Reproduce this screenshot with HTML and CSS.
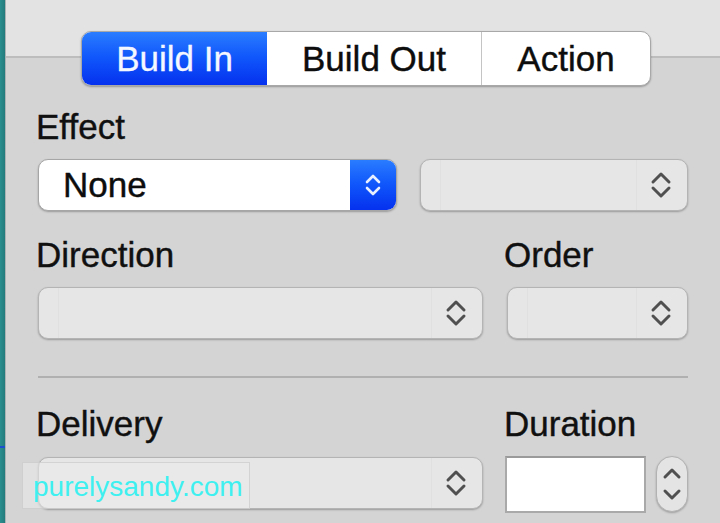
FILE: index.html
```html
<!DOCTYPE html>
<html lang="en">
<head>
<meta charset="utf-8">
<title>Build In</title>
<link rel="stylesheet" href="styles.css">
</head>
<body>
<div class="app">
  <div class="edge"><span class="edge-mark"></span></div>
  <div class="panel">
    <div class="tabs">
      <div class="seg seg-active">Build In</div>
      <div class="seg">Build Out</div>
      <div class="seg seg-last">Action</div>
    </div>

    <div class="label label-effect">Effect</div>
    <div class="row-effect">
      <div class="popup popup-primary">
        <span class="popup-text">None</span>
        <span class="popup-arrow-blue">
          <svg width="22" height="30" viewBox="0 0 22 30"><path d="M5 12 L11 6 L17 12 M5 18 L11 24 L17 18" fill="none" stroke="#e8f0ff" stroke-width="2.6" stroke-linecap="round" stroke-linejoin="round"/></svg>
        </span>
      </div>
      <div class="popup popup-side">
        <span class="popup-cell"></span>
        <span class="popup-arrow">
          <svg width="24" height="32" viewBox="0 0 24 32"><path d="M4 13 L12 5 L20 13 M4 19 L12 27 L20 19" fill="none" stroke="#505050" stroke-width="3" stroke-linecap="round" stroke-linejoin="round"/></svg>
        </span>
      </div>
    </div>

    <div class="grid grid-dir">
      <div class="label">Direction</div>
      <div class="label label-right">Order</div>
      <div class="popup">
        <span class="popup-cell"></span>
        <span class="popup-arrow">
          <svg width="24" height="32" viewBox="0 0 24 32"><path d="M4 13 L12 5 L20 13 M4 19 L12 27 L20 19" fill="none" stroke="#505050" stroke-width="3" stroke-linecap="round" stroke-linejoin="round"/></svg>
        </span>
      </div>
      <div class="popup">
        <span class="popup-cell"></span>
        <span class="popup-arrow">
          <svg width="24" height="32" viewBox="0 0 24 32"><path d="M4 13 L12 5 L20 13 M4 19 L12 27 L20 19" fill="none" stroke="#505050" stroke-width="3" stroke-linecap="round" stroke-linejoin="round"/></svg>
        </span>
      </div>
    </div>

    <div class="separator"></div>

    <div class="grid grid-del">
      <div class="label">Delivery</div>
      <div class="label label-right">Duration</div>
      <div class="popup popup-del">
        <span class="popup-cell"></span>
        <span class="popup-arrow">
          <svg width="24" height="32" viewBox="0 0 24 32"><path d="M4 13 L12 5 L20 13 M4 19 L12 27 L20 19" fill="none" stroke="#505050" stroke-width="3" stroke-linecap="round" stroke-linejoin="round"/></svg>
        </span>
      </div>
      <div class="duration">
        <div class="field"></div>
        <div class="stepper">
          <svg width="24" height="40" viewBox="0 0 24 40"><path d="M5 13 L12 6 L19 13 M5 27 L12 34 L19 27" fill="none" stroke="#505050" stroke-width="3" stroke-linecap="round" stroke-linejoin="round"/></svg>
        </div>
      </div>
    </div>

    <div class="watermark">purelysandy.com</div>
  </div>
</div>
</body>
</html>
```

FILE: styles.css
```css
html, body {
  margin: 0;
  padding: 0;
}
body {
  width: 720px;
  height: 523px;
  overflow: hidden;
  font-family: "Liberation Sans", Arial, sans-serif;
  background: #d4d4d4;
  color: #111;
}
.app {
  display: flex;
  height: 523px;
}
.edge {
  position: relative;
  width: 5px;
  flex: none;
  background: linear-gradient(to right, #2b8f8f, #237b7d);
  border-right: 1px solid #a9b3b3;
}
.edge-mark {
  position: absolute;
  left: 0;
  top: 446px;
  width: 5px;
  height: 2px;
  background: #1a4fd0;
}
.panel {
  position: relative;
  flex: 1;
  padding: 31px 32px 0 32px;
  background: linear-gradient(to bottom, #e3e3e3 0, #e3e3e3 56px, #bdbdbd 56px, #bdbdbd 58px, #d4d4d4 58px);
}

/* segmented control */
.tabs {
  display: flex;
  width: 570px;
  height: 55px;
  margin-left: 43px;
  box-sizing: border-box;
  border: 1px solid #a8a8a8;
  border-radius: 10px;
  background: #fff;
  box-shadow: 0 1px 2px rgba(0,0,0,0.3);
  overflow: hidden;
}
.seg {
  display: flex;
  align-items: center;
  justify-content: center;
  font-size: 35px;
  color: #0d0d0d;
  -webkit-text-stroke: 0.4px #0d0d0d;
  width: 214px;
  border-right: 1px solid #c4c4c4;
}
.seg-active {
  width: 185px;
  color: #f4f7ff;
  -webkit-text-stroke: 0.3px #f4f7ff;
  background: linear-gradient(to bottom, #2a7cff 0%, #0f55fb 50%, #0531ee 100%);
  border-right: none;
}
.seg-last {
  flex: 1;
  border-right: none;
}

/* labels */
.label {
  font-size: 35px;
  line-height: 40px;
  color: #101010;
  -webkit-text-stroke: 0.4px #101010;
  margin-left: -2px;
}
.label-effect {
  margin-top: 21px;
}
.label-right {
  margin-left: -3px;
}

/* popups */
.row-effect {
  display: flex;
  gap: 23px;
  margin-top: 12px;
}
.popup {
  display: flex;
  align-items: stretch;
  height: 52px;
  box-sizing: border-box;
  border: 1px solid #b4b4b4;
  border-radius: 10px;
  background: #e6e6e6;
  box-shadow: 0 1px 2px rgba(0,0,0,0.28);
  overflow: hidden;
}
.popup-primary {
  width: 359px;
  background: #fff;
  border-color: #a6a6a6;
}
.popup-side {
  width: 268px;
}
.popup-text {
  flex: 1;
  display: flex;
  align-items: center;
  padding-left: 24px;
  font-size: 35px;
  color: #0d0d0d;
  -webkit-text-stroke: 0.4px #0d0d0d;
}
.popup-arrow-blue {
  width: 46px;
  display: flex;
  align-items: center;
  justify-content: center;
  background: linear-gradient(to bottom, #2a7cff 0%, #0f55fb 50%, #0531ee 100%);
}
.popup-cell {
  flex: 1;
  margin-left: 19px;
  border-left: 1px solid #e0e0e0;
  border-right: 1px solid #e0e0e0;
}
.popup-arrow {
  width: 48px;
  display: flex;
  align-items: center;
  justify-content: center;
  padding-right: 2px;
}

.grid {
  display: grid;
  grid-template-columns: 445px 181px;
  column-gap: 24px;
}
.grid-dir {
  margin-top: 24px;
  row-gap: 12px;
}
.separator {
  height: 2px;
  background: #b0b0b0;
  margin-top: 37px;
}
.grid-del {
  margin-top: 26px;
  row-gap: 13px;
}
.popup-del .popup-cell {
  border-left: none;
}
.duration {
  display: flex;
  align-items: flex-start;
  margin-left: -2px;
  margin-top: -1px;
}
.field {
  width: 141px;
  height: 57px;
  box-sizing: border-box;
  background: #fff;
  border: 2px solid #a9a9a9;
  border-top-color: #9a9a9a;
}
.stepper {
  width: 32px;
  height: 56px;
  margin-left: 10px;
  box-sizing: border-box;
  border: 1px solid #b2b2b2;
  border-radius: 16px;
  background: #e4e4e4;
  box-shadow: 0 1px 2px rgba(0,0,0,0.25);
  display: flex;
  align-items: center;
  justify-content: center;
}

/* watermark overlay */
.watermark {
  position: absolute;
  left: 16px;
  top: 462px;
  width: 228px;
  height: 47px;
  box-sizing: border-box;
  padding-left: 10px;
  line-height: 47px;
  font-size: 28px;
  color: #3ef0f0;
  background: rgba(235,235,235,0.55);
  border: 1px solid rgba(190,190,190,0.5);
}
```
